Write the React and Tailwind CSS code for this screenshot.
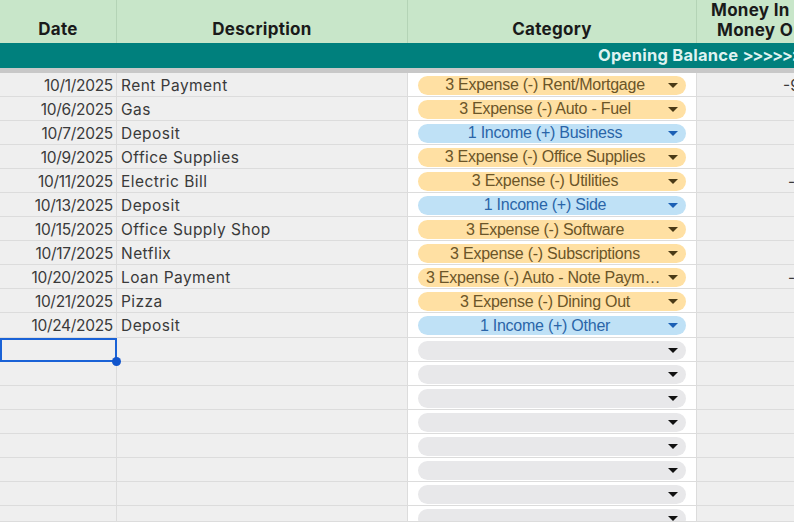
const rows = [
  { date: '10/1/2025', desc: 'Rent Payment', cat: '3 Expense (-) Rent/Mortgage', type: 'expense', money: '-9', indent: 'pl-[86px]' },
  { date: '10/6/2025', desc: 'Gas', cat: '3 Expense (-) Auto - Fuel', type: 'expense' },
  { date: '10/7/2025', desc: 'Deposit', cat: '1 Income (+) Business', type: 'income' },
  { date: '10/9/2025', desc: 'Office Supplies', cat: '3 Expense (-) Office Supplies', type: 'expense' },
  { date: '10/11/2025', desc: 'Electric Bill', cat: '3 Expense (-) Utilities', type: 'expense', money: '-', indent: 'pl-[91px]' },
  { date: '10/13/2025', desc: 'Deposit', cat: '1 Income (+) Side', type: 'income' },
  { date: '10/15/2025', desc: 'Office Supply Shop', cat: '3 Expense (-) Software', type: 'expense' },
  { date: '10/17/2025', desc: 'Netflix', cat: '3 Expense (-) Subscriptions', type: 'expense' },
  { date: '10/20/2025', desc: 'Loan Payment', cat: '3 Expense (-) Auto - Note Payment', type: 'expense', money: '-', indent: 'pl-[91px]' },
  { date: '10/21/2025', desc: 'Pizza', cat: '3 Expense (-) Dining Out', type: 'expense' },
  { date: '10/24/2025', desc: 'Deposit', cat: '1 Income (+) Other', type: 'income' },
]
const blanks = Array.from({ length: 8 }, () => ({ date: '', desc: '', cat: '', type: 'empty' }))

const pill = {
  expense: 'bg-[#ffe0a3] text-[#6b5528]',
  income: 'bg-[#bfe1f6] text-[#2a65a8]',
  empty: 'bg-[#e8e8ea]',
}
const caret = {
  expense: 'border-t-[#4a3a16]',
  income: 'border-t-[#1a5fb4]',
  empty: 'border-t-[#111111]',
}

function Row({ row, selected, last }) {
  return (
    <div className={`grid shrink-0 grid-cols-[117px_291px_289px_97px] ${last ? 'h-[16px]' : 'h-[24.1px]'}`}>
      <div className="relative border-r border-b border-r-[#dcdcdc] border-b-[#dcdcdc] bg-[#efefef] pr-[3px] text-right">
        <div className="truncate pt-[3px] leading-[20px] tracking-[-0.3px] text-[#3a3a3a]">{row.date}</div>
        {selected && (
          <>
            <div className="absolute inset-x-0 top-0 -right-px -bottom-px border-2 border-[#1a62d6]" />
            <div className="absolute -right-[5px] -bottom-[5px] z-10 h-[9px] w-[9px] rounded-full bg-[#1155cc]" />
          </>
        )}
      </div>
      <div className="truncate border-r border-b border-[#dcdcdc] bg-[#efefef] pt-[3px] pl-[4px] leading-[20px] tracking-[0.45px] text-[#3a3a3a]">
        {row.desc}
      </div>
      <div className="overflow-hidden border-r border-b border-[#dcdcdc] bg-white pt-[3px] pr-[10px] pl-[10px]">
        <div className={`flex h-[19px] items-center rounded-full pr-[8px] pl-[8px] font-['Liberation_Sans',Arial,sans-serif] text-[16px] tracking-[-0.25px] ${pill[row.type]}`}>
          <span className="min-w-0 flex-1 truncate pr-[4px] text-center">{row.cat}</span>
          <span className={`h-0 w-0 shrink-0 border-x-[5px] border-t-[5px] border-x-transparent ${caret[row.type]}`} />
        </div>
      </div>
      <div className={`overflow-hidden border-b border-[#dcdcdc] bg-[#efefef] pt-[3px] leading-[20px] whitespace-nowrap text-[#3a3a3a] ${row.indent ?? ''}`}>
        {row.money}
      </div>
    </div>
  )
}

export default function App() {
  const all = [...rows, ...blanks]
  return (
    <div className="flex h-[529px] w-[794px] flex-col overflow-hidden bg-white font-['Inter',sans-serif] text-[15.5px]">
      <div className="grid h-[43px] shrink-0 grid-cols-[117px_291px_289px_97px] bg-[#c8e6c9] text-[17px] font-bold tracking-[0.3px] text-[#1a1a1a]">
        <div className="border-r border-[#b4d4b6] pt-[17px] text-center leading-[24px]">Date</div>
        <div className="border-r border-[#b4d4b6] pt-[17px] text-center leading-[24px]">Description</div>
        <div className="border-r border-[#b4d4b6] pt-[17px] text-center leading-[24px]">Category</div>
        <div className="overflow-hidden pl-[14px] leading-[20px] whitespace-nowrap">
          <div>Money In</div>
          <div className="pl-[6px]">Money Out</div>
        </div>
      </div>
      <div className="flex h-[25px] shrink-0 items-center overflow-hidden bg-[#00807d] pl-[598px] text-[16.5px] font-bold tracking-[0.25px] whitespace-nowrap text-[#dff3f1]">
        Opening Balance&nbsp;<span className="tracking-[-1.4px]">&gt;&gt;&gt;&gt;&gt;&gt;</span>
      </div>
      <div className="h-[4.5px] shrink-0 bg-[#c8c8c8]" />
      {all.map((row, i) => (
        <Row key={i} row={row} selected={i === 11} last={i === all.length - 1} />
      ))}
    </div>
  )
}
